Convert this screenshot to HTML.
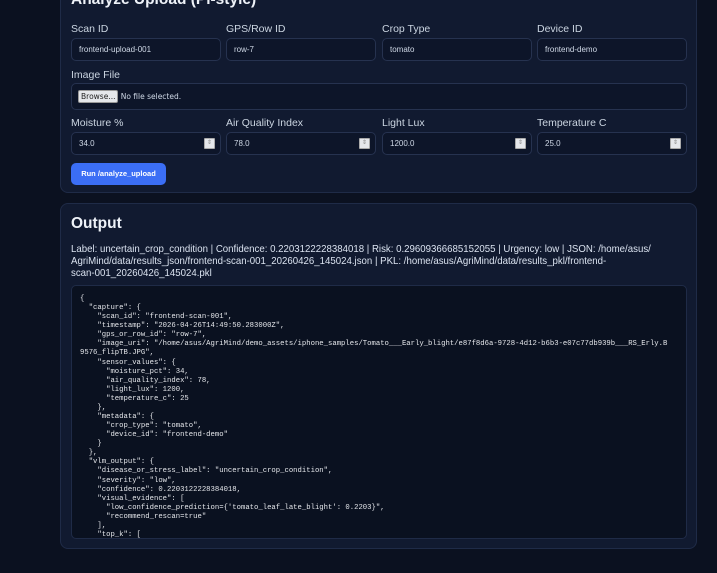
<!DOCTYPE html>
<html><head><style>
*{box-sizing:border-box;margin:0;padding:0}
body{width:717px;height:573px;overflow:hidden;background:#0b1120;font-family:"Liberation Sans",sans-serif;color:#dbe3f0;position:relative}
.card{position:absolute;left:60px;width:637px;background:#111a30;border:1px solid #1f2b47;border-radius:8px}
h2{position:absolute;left:10px;font-size:15.5px;font-weight:bold;color:#eef2f8}
.lbl{position:absolute;font-size:10.5px;color:#cbd5e1}
.inp{position:absolute;height:23px;background:#0d1529;border:1px solid #26324f;border-radius:5px;font-size:8px;color:#cfd8e6;padding-left:7px;line-height:21px}
.sp{position:absolute;right:5px;top:5px;width:11px;height:11px;background:#e5e7eb;border:1px solid #aaa;border-radius:1px;font-size:6px;color:#888;line-height:9px;text-align:center}
.btn{position:absolute;left:10px;top:172px;width:95px;height:22px;background:#3b6ef5;border-radius:5px;color:#fff;font-size:7.5px;font-weight:bold;text-align:center;line-height:22px}
pre{position:absolute;left:10px;top:81px;width:616px;height:254px;background:#0a1120;border:1px solid #1f2b47;border-radius:5px;font-family:"Liberation Mono",monospace;font-size:7.25px;line-height:9.08px;color:#e5e7eb;padding:9px 8px;overflow:hidden;white-space:pre}
</style></head><body>
<div class="card" style="top:-10px;height:203px">
<h2 style="top:0px">Analyze Upload (Pi-style)</h2>
<div class="lbl" style="left:10px;top:32px">Scan ID</div>
<div class="lbl" style="left:165px;top:32px">GPS/Row ID</div>
<div class="lbl" style="left:321px;top:32px">Crop Type</div>
<div class="lbl" style="left:476px;top:32px">Device ID</div>
<div class="inp" style="left:10px;top:47px;width:150px">frontend-upload-001</div>
<div class="inp" style="left:165px;top:47px;width:150px">row-7</div>
<div class="inp" style="left:321px;top:47px;width:150px">tomato</div>
<div class="inp" style="left:476px;top:47px;width:150px">frontend-demo</div>
<div class="lbl" style="left:10px;top:78px">Image File</div>
<div class="inp" style="left:10px;top:92px;width:616px;height:27px;line-height:25px;padding-left:6px"><span style="display:inline-block;background:#e5e7eb;color:#222;border:1px solid #999;border-radius:2px;padding:0 2px;line-height:11px;font-family:'DejaVu Sans',sans-serif;font-size:7.5px">Browse...</span> <span style="font-family:'DejaVu Sans',sans-serif;font-size:7.5px">No file selected.</span></div>
<div class="lbl" style="left:10px;top:126px">Moisture %</div>
<div class="lbl" style="left:165px;top:126px">Air Quality Index</div>
<div class="lbl" style="left:321px;top:126px">Light Lux</div>
<div class="lbl" style="left:476px;top:126px">Temperature C</div>
<div class="inp" style="left:10px;top:141px;width:150px">34.0<div class="sp">⇕</div></div>
<div class="inp" style="left:165px;top:141px;width:150px">78.0<div class="sp">⇕</div></div>
<div class="inp" style="left:321px;top:141px;width:150px">1200.0<div class="sp">⇕</div></div>
<div class="inp" style="left:476px;top:141px;width:150px">25.0<div class="sp">⇕</div></div>
<div class="btn">Run /analyze_upload</div>
</div>
<div class="card" style="top:203px;height:346px">
<h2 style="top:11px">Output</h2>
<div style="position:absolute;left:10px;top:39px;white-space:nowrap;font-size:10.5px;line-height:12.2px;color:#dbe3f0;transform:scaleX(0.92);transform-origin:0 0">Label: uncertain_crop_condition | Confidence: 0.2203122228384018 | Risk: 0.29609366685152055 | Urgency: low | JSON: /home/asus/<br>AgriMind/data/results_json/frontend-scan-001_20260426_145024.json | PKL: /home/asus/AgriMind/data/results_pkl/frontend-<br>scan-001_20260426_145024.pkl</div>
<pre>{
  "capture": {
    "scan_id": "frontend-scan-001",
    "timestamp": "2026-04-26T14:49:50.283000Z",
    "gps_or_row_id": "row-7",
    "image_uri": "/home/asus/AgriMind/demo_assets/iphone_samples/Tomato___Early_blight/e87f8d6a-9728-4d12-b6b3-e07c77db939b___RS_Erly.B
9576_flipTB.JPG",
    "sensor_values": {
      "moisture_pct": 34,
      "air_quality_index": 78,
      "light_lux": 1200,
      "temperature_c": 25
    },
    "metadata": {
      "crop_type": "tomato",
      "device_id": "frontend-demo"
    }
  },
  "vlm_output": {
    "disease_or_stress_label": "uncertain_crop_condition",
    "severity": "low",
    "confidence": 0.2203122228384018,
    "visual_evidence": [
      "low_confidence_prediction={'tomato_leaf_late_blight': 0.2203}",
      "recommend_rescan=true"
    ],
    "top_k": [</pre>
</div>
</body></html>
